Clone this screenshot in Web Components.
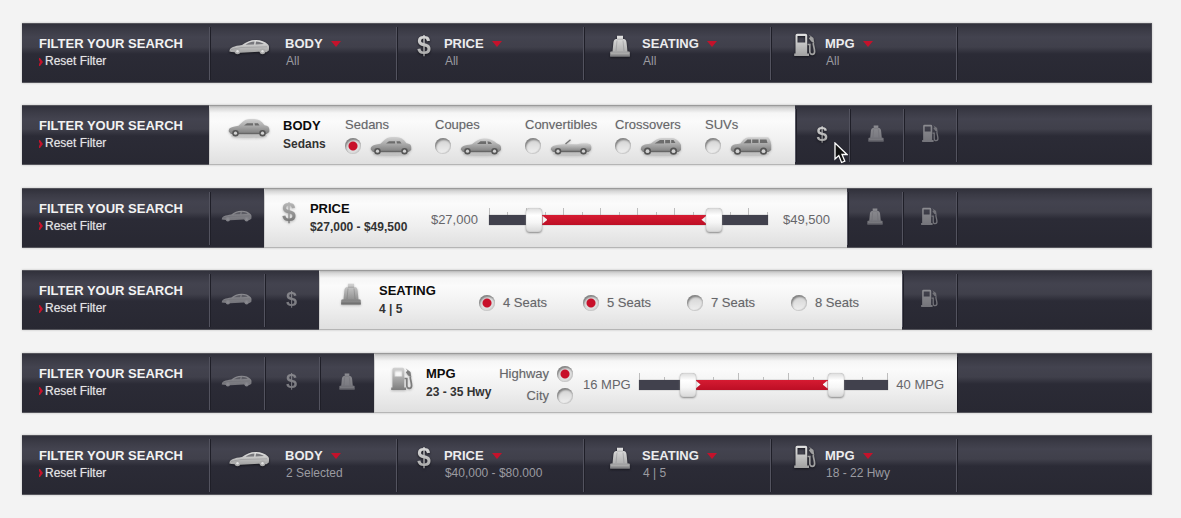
<!DOCTYPE html>
<html lang="en">
<head>
<meta charset="utf-8">
<title>Vehicle search filters</title>
<style>
  body { margin: 0; background: #f3f3f3; font-family: "Liberation Sans", Arial, sans-serif; }
</style>
</head>
<body>
<filter-page>
  <filter-bar>
    <filter-item icon="car" label="BODY" value="All"></filter-item>
    <filter-item icon="dollar" label="PRICE" value="All"></filter-item>
    <filter-item icon="seat" label="SEATING" value="All"></filter-item>
    <filter-item icon="pump" label="MPG" value="All"></filter-item>
  </filter-bar>

  <filter-bar class="narrow">
    <filter-panel icon="sedan" label="BODY" value="Sedans">
      <body-options></body-options>
    </filter-panel>
    <filter-tab icon="dollar" label="Price" active><mouse-pointer></mouse-pointer></filter-tab>
    <filter-tab icon="seat" label="Seating"></filter-tab>
    <filter-tab icon="pump" label="MPG"></filter-tab>
  </filter-bar>

  <filter-bar>
    <filter-tab icon="car" label="Body"></filter-tab>
    <filter-panel icon="dollar" label="PRICE" value="$27,000 - $49,500">
      <range-slider class="price" name="Price" low-label="$27,000" high-label="$49,500" min="22300" max="55200" low="27000" high="49500" ticks="15"></range-slider>
    </filter-panel>
    <filter-tab icon="seat" label="Seating"></filter-tab>
    <filter-tab icon="pump" label="MPG"></filter-tab>
  </filter-bar>

  <filter-bar>
    <filter-tab icon="car" label="Body"></filter-tab>
    <filter-tab icon="dollar" label="Price"></filter-tab>
    <filter-panel icon="seat" label="SEATING" value="4 | 5">
      <seat-options></seat-options>
    </filter-panel>
    <filter-tab icon="pump" label="MPG"></filter-tab>
  </filter-bar>

  <filter-bar>
    <filter-tab icon="car" label="Body"></filter-tab>
    <filter-tab icon="dollar" label="Price"></filter-tab>
    <filter-tab icon="seat" label="Seating"></filter-tab>
    <filter-panel icon="pump" label="MPG" value="23 - 35 Hwy">
      <road-options></road-options>
      <range-slider class="mpg" name="MPG" low-label="16 MPG" high-label="40 MPG" min="160" max="400" low="202" high="354" ticks="10"></range-slider>
    </filter-panel>
  </filter-bar>

  <filter-bar>
    <filter-item icon="car" label="BODY" value="2 Selected"></filter-item>
    <filter-item icon="dollar" label="PRICE" value="$40,000 - $80.000"></filter-item>
    <filter-item icon="seat" label="SEATING" value="4 | 5"></filter-item>
    <filter-item icon="pump" label="MPG" value="18 - 22 Hwy"></filter-item>
  </filter-bar>
</filter-page>

<script>
const define = (name, render) => customElements.define(name, class extends HTMLElement {
  connectedCallback() {
    if (this.shadowRoot) return;
    const t = document.createElement('template');
    t.innerHTML = render(this);
    this.attachShadow({ mode: 'open' }).append(t.content.cloneNode(true));
  }
});
const at = (el, name) => el.getAttribute(name) || '';

/* ---- icons ---- */
const grad = `<defs><linearGradient id="g" x1="0" y1="0" x2="0" y2="1"><stop offset="0" class="s1"/><stop offset="1" class="s2"/></linearGradient></defs>`;
const wheels = (a, b, y, r = 3.3) => [a, b].map(x =>
  `<circle cx="${x}" cy="${y}" r="${r}" class="tire"/><circle cx="${x}" cy="${y}" r="${r - 1.7}" class="hub"/>`).join('');
const shadow = `<ellipse cx="21" cy="18" rx="18" ry="2" class="floor"/>`;
const sill = `<path d="M10 15.5H31" class="sill"/>`;
const icons = {
  car: [40, 16, `<path fill="url(#g)" d="M.5 11.5C1 8.500 5 7 13 6C17 3 21 1 27 1C32 1 36 2.500 39 5.500C40.500 7 40 9 39.800 11.500L37.500 13.200L30 12.800L12 13.800L2.500 13L.3 12.500Z"/>
    <path class="glass" d="M16.500 5.800C19 3.900 22 2.700 25.500 2.500L25 5.600ZM27 2.400C30 2.500 32.500 3.300 35 4.900L26.600 5.500Z"/><path class="line" d="M2 10.500L12 8.500L38 7.800"/>${wheels(8.500, 33.500, 12.300, 2.900)}`],
  sedan: [42, 20, `${shadow}<path fill="url(#g)" d="M.8 13.500C.5 10.500 2 9 10.500 7.800C14 4.500 16 2 20 1.300C26 .5 32 1 35 5.500L36.500 7.300C40.500 8 41.800 9 41.200 14L38.500 16H3Z"/>
    <path class="glass" d="M16 7.500L19 5.200H25V7.500ZM26.500 5.200L30 5.300L31.500 7.500H27Z"/>${sill}${wheels(7.500, 34.500, 15.200)}`],
  coupe: [42, 20, `${shadow}<path fill="url(#g)" d="M.8 13.500C1 10.500 4 9.300 12 8.300C16 5 19 2.800 24 2.600C29 2.500 33 4 37 7.500C40.500 8.500 41.500 10 41 14L38.500 16H3Z"/>
    <path class="glass" d="M17 8L20.500 5.300H26V8ZM27.500 5.300L30.500 5.900L32 8H28Z"/>${sill}${wheels(7.500, 34.500, 15.200)}`],
  convertible: [42, 20, `${shadow}<path fill="url(#g)" d="M.8 13.500C1 10 4 9 15 8L27 8.300C33 6.800 38 7.200 40.500 8.500C41.500 10 41.500 12 41 14L38.500 16H3Z"/>
    <path d="M15.500 8L20.500 3.800" class="post"/>${sill}${wheels(8, 33.500, 15.200)}`],
  crossover: [42, 20, `${shadow}<path fill="url(#g)" d="M.8 13.500C1 9.500 3 8.500 11 7.500C15 4 18 2.200 22 2H33C37 3 40 6.500 41 9V14L38.500 16H3Z"/>
    <path class="glass" d="M14.500 7.500L20 4H24V7.500ZM25.200 4H30V7.300H25.200ZM31.200 4H33.500L35.500 7H31.200Z"/>${sill}${wheels(7.500, 33.500, 15.200, 3.600)}`],
  suv: [42, 20, `${shadow}<path fill="url(#g)" d="M.8 14C.8 9.500 2 8.500 10.500 7.500C13 4 15 1.500 19 1.200H38C40 3 41 6 41.200 9V14L38.500 16H3Z"/>
    <path class="glass" d="M13.500 7.300L17.500 3.400H21V7.300ZM22.200 3.400H28.500V7H22.200ZM30 3.400H36.500L37.500 7H30Z"/>${sill}${wheels(7.500, 33.500, 15.200, 3.600)}`],
  seat: [20, 22, `<path fill="url(#g)" d="M7 .8H13V4H14C16 4.500 16.500 6 16.700 8.500L17.500 16.500H19Q19.800 16.500 19.800 17.500V21.500H.2V17.500Q.2 16.500 1 16.500H2.500L3.300 8.500C3.500 6 4 4.500 6 4H7Z"/>
    <path class="line" d="M7 5.500L6 16M13 5.500L14 16M1 17H19M7 4.200H13"/><path class="base" d="M.2 19.500H19.800V21.500H.2Z"/>`],
  pump: [22, 24, `<path fill="url(#g)" fill-rule="evenodd" d="M1.500 2.500Q1.500 .8 3.200 .8H11.500Q13.200 .8 13.200 2.500V20.500H15V23H.2V20.500H1.500ZM3.500 3V9.500H11.200V3Z"/>
    <path class="hose" d="M13.500 11.500H15.800V18.500C15.800 22.500 20.700 22 20.600 18.500C20.500 14.500 19 12.500 19.300 9.500"/><path class="nozzle" d="M14.500 1.300L19.500 5L20.300 10L17.200 8.500L14.800 5.300L16.500 3.800Z"/>`],
};
define('filter-icon', el => {
  const name = at(el, 'name');
  const css = `<style>
    :host { display: block; --s1: #e2e2e2; --s2: #a0a0a0; --ink: #77777c; --tire: #aaa; filter: drop-shadow(0 1px 1px #15151c); }
    :host([tone="dim"]) { --s1: #8c8c91; --s2: #74747a; --ink: #5c5c64; --tire: #828288; filter: none; }
    :host([tone="mid"]) { --s1: #dedede; --s2: #9a9a9a; }
    :host([tone="light"]) { --s1: #d2d2d2; --s2: #7c7c7c; --ink: #6c6c6c; --tire: #555; filter: drop-shadow(0 1px 1px #bbb); }
    svg { display: block; overflow: visible; }
    .s1 { stop-color: var(--s1); } .s2 { stop-color: var(--s2); }
    .tire { fill: var(--tire); } .hub { fill: var(--s1); }
    .glass { fill: var(--ink); }
    .line { fill: none; stroke: var(--ink); stroke-width: .6; opacity: .6; }
    .base { fill: var(--ink); opacity: .7; }
    .sill { stroke: #666; stroke-width: 1.4; }
    .post { stroke: #777; stroke-width: 1.4; }
    .floor { fill: #bbb; opacity: .6; }
    .hose { fill: none; stroke: var(--s2); stroke-width: 1.700; }
    .nozzle { fill: var(--s2); }
    b { display: block; font-size: 25px; line-height: 26px; text-align: center;
        background: linear-gradient(var(--s1), var(--s2)); -webkit-background-clip: text; background-clip: text; color: transparent; }
    :host([tone="light"]) b { background-image: linear-gradient(#c4c4c4, #6c6c6c); }
    :host([tone="dim"]) b, :host([tone="mid"]) b { font-size: 20px; }
  </style>`;
  if (name === 'dollar') return css + '<b aria-hidden="true">$</b>';
  const [w, h, art] = icons[name];
  const small = /dim|mid/.test(at(el, 'tone'));
  const k = small ? .78 : 1;
  return css + `<svg aria-hidden="true" width="${Math.round(w * k)}" height="${Math.round(h * k)}" viewBox="0 0 ${w} ${h}">${grad}${art}</svg>`;
});

/* ---- page and bars ---- */
define('filter-page', () => `<style>
  :host { display: flex; flex-direction: column; justify-content: space-between; gap: 22px;
          box-sizing: border-box; min-height: 100vh; padding: 23px 29px 23px 22px; }
</style><slot></slot>`);

define('filter-bar', () => `<style>
  :host { --tab: 55px; display: flex; min-height: 60px; box-sizing: border-box;
    background: linear-gradient(#2f2f39, #3b3b46 7px, #43434f 14px, #40404b 24px, #2b2b36 31px, #282832);
    box-shadow: inset 0 1px #55555c, inset 0 -1px #55555c, inset -1px 0 #4a4a53, 0 0 2px #bbb; }
  :host(.narrow) { --tab: 54px; }
  header { flex: 0 0 170px; padding: 12px 0 0 17px; }
  h2 { margin: 0; font-size: 13px; line-height: 18px; color: #f2f2f2; white-space: nowrap; }
  a { display: flex; align-items: center; gap: 2px; font-size: 12px; line-height: 17px; color: #e4e4e6; text-decoration: none; text-shadow: 0 0 1px #88888c; }
  a svg { flex: none; }
  .group { flex: 0 0 748px; display: flex; }
  .rest { flex: 1; margin-left: -1px;
    background: linear-gradient(90deg, #53535f 1px, #1f1f28 1px, #1f1f28 2px, transparent 2px) 0 4px / 100% 53px no-repeat; }
</style>
<header><h2>FILTER YOUR SEARCH</h2>
<a href="#"><svg width="4" height="8" viewBox="0 0 4 8"><path d="M0 0H1L4 4L1 8H0V6L1 4L0 2Z" fill="#c4122b"/></svg>Reset Filter</a></header>
<div class="group"><slot></slot></div><div class="rest"></div>`);

const divider = `background: linear-gradient(90deg, #53535f 1px, #1f1f28 1px, #1f1f28 2px, transparent 2px) 0 4px / 100% 53px no-repeat;`;

define('filter-item', el => `<style>
  :host { flex: 1; min-width: 0; display: block; ${divider} }
  button { all: unset; display: flex; align-items: flex-start; box-sizing: border-box; width: 100%; height: 100%; cursor: pointer; }
  .car { padding: 16px 16px 0 20px; } .dollar { padding: 9px 13px 0 21px; }
  .seat { padding: 12px 12px 0 27px; } .pump { padding: 10px 9px 0 24px; }
  .text { padding-top: 12px; white-space: nowrap; }
  .name { display: flex; align-items: center; gap: 8px; font-size: 13px; line-height: 18px; font-weight: 700; color: #ececee; }
  .value { display: block; padding-left: 1px; font-size: 12px; line-height: 16px; color: #9b9ba1; }
</style>
<button type="button"><filter-icon class="${at(el, 'icon')}" name="${at(el, 'icon')}"></filter-icon>
<span class="text"><span class="name">${at(el, 'label')}<svg width="10" height="6" viewBox="0 0 10 6"><path d="M0 0H10L5 6Z" fill="#c4122b"/></svg></span>
<span class="value">${at(el, 'value')}</span></span></button>`);

define('filter-tab', el => `<style>
  :host { flex: 0 0 var(--tab); position: relative; display: block; ${divider} }
  button { all: unset; display: flex; align-items: center; justify-content: center; width: 100%; height: 57px; cursor: pointer; }
</style>
<button type="button" aria-label="${at(el, 'label')}"><filter-icon name="${at(el, 'icon')}" tone="${el.hasAttribute('active') ? 'mid' : 'dim'}"></filter-icon></button><slot></slot>`);

define('mouse-pointer', () => `<style>
  :host { position: absolute; left: 39px; top: 37px; pointer-events: none; } svg { display: block; }
</style><svg width="14" height="22" viewBox="0 0 14 22"><path d="M1 1V17L4.800 13.500L7.600 20.500L10.800 19.200L8 12.500H13Z" fill="#111" stroke="#fff" stroke-width="1.300"/></svg>`);

define('filter-panel', el => `<style>
  :host { flex: 1; min-width: 0; position: relative; display: flex; align-items: stretch;
    background: linear-gradient(#a9a9a9, #d6d6d6 3px, #f6f6f6 8px, #fbfbfb 16px, #f0f0f0 36px, #dfdfdf);
    box-shadow: inset 0 -1px #b5b5b5, inset 0 1px #9a9a9a, inset 1px 0 #cfcfcf; }
  .sedan { padding: 13px 13px 0 19px; } .dollar { padding: 11px 14px 0 18px; }
  .seat { padding: 13px 18px 0 22px; } .pump { padding: 14px 13px 0 17px; }
  .text { flex: none; padding-top: 12px; white-space: nowrap; color: #151515; }
  h3 { margin: 0; font-size: 13px; line-height: 18px; color: #0c0c0c; }
  p { margin: 0; font-size: 12px; line-height: 18px; font-weight: 700; color: #333; }
  .wsedan { width: 62px; } .wdollar { width: 121px; } .wseat { width: 100px; } .wpump { width: 74px; }
</style>
<filter-icon class="${at(el, 'icon')}" name="${at(el, 'icon')}" tone="light"></filter-icon>
<div class="text w${at(el, 'icon')}"><h3>${at(el, 'label')}</h3><p>${at(el, 'value')}</p></div><slot></slot>`);

/* ---- controls ---- */
const controlCss = `
  label { color: #66666a; font-size: 13px; line-height: 16px; white-space: nowrap; text-shadow: 0 0 1px #c4c4c4; }
  input { appearance: none; flex: none; width: 16px; height: 16px; margin: 0; border-radius: 50%;
    background: linear-gradient(#d2d2d2, #f0f0f0); box-shadow: inset 1px 2px 2px #808080, inset -1px -1px 1px #c8c8c8; }
  input:checked { background: radial-gradient(circle, #c8102a 4px, #dedede 5px); }
`;
define('body-options', () => `<style>
  :host { display: grid; grid-template-columns: repeat(5, 90px); align-content: start; padding-top: 12px; }
  ${controlCss}
  .top { display: block; }
  .row { display: flex; align-items: center; gap: 9px; height: 26px; }
</style>` + [['Sedans', 'sedan'], ['Coupes', 'coupe'], ['Convertibles', 'convertible'], ['Crossovers', 'crossover'], ['SUVs', 'suv']]
  .map(([t, i], n) => `<label><span class="top">${t}</span><span class="row"><input type="checkbox" name="body"${n ? '' : ' checked'}><filter-icon name="${i}" tone="light"></filter-icon></span></label>`).join(''));

define('seat-options', () => `<style>
  :host { display: grid; grid-template-columns: repeat(4, 104px); align-items: center; padding-top: 5px; }
  ${controlCss}
  label { display: flex; align-items: center; gap: 8px; }
</style>` + [4, 5, 7, 8].map(n => `<label><input type="checkbox" name="seats"${n < 6 ? ' checked' : ''}>${n} Seats</label>`).join(''));

define('road-options', () => `<style>
  :host { flex: none; width: 73px; display: flex; flex-direction: column; gap: 6px; padding-top: 13px; }
  ${controlCss}
  label { display: flex; justify-content: flex-end; align-items: center; gap: 8px; }
</style>
<label>Highway<input type="radio" name="road" checked></label>
<label>City<input type="radio" name="road"></label>`);

define('range-slider', el => {
  const n = k => Number(at(el, k));
  const pos = v => (v - n('min')) / (n('max') - n('min'));
  const marks = '<i></i>'.repeat(n('ticks') + 1);
  const input = (k, text) => `<input type="range" aria-label="${text} ${at(el, 'name')}" min="${n('min')}" max="${n('max')}" value="${n(k)}">`;
  return `<style>
  :host { flex: 1; display: flex; align-items: center; box-sizing: border-box; padding-top: 4px; font-size: 13px; color: #66666a; white-space: nowrap; }
  :host(.price) { gap: 11px; padding-right: 17px; }
  :host(.price) .high { padding-left: 4px; }
  :host(.mpg) { gap: 8px; padding-right: 13px; padding-left: 10px; }
  .track { flex: 1; display: grid; align-items: center; height: 24px; --a: ${pos(n('low'))}; --b: ${pos(n('high'))}; }
  .track > * { grid-area: 1 / 1; }
  .ticks { display: flex; justify-content: space-between; align-self: start; align-items: flex-end; height: 8px; }
  .ticks i { width: 1px; height: 4px; background: #bdbdbd; }
  .ticks i:nth-child(odd) { height: 8px; }
  .rail { height: 10px; background: #41414d; box-shadow: 0 0 1px #888; }
  .fill { position: relative; height: 10px; background: linear-gradient(#d61b32, #bd0e25);
    margin-left: calc(16px + (100% - 16px) * var(--a)); margin-right: calc(100% - (100% - 16px) * var(--b)); }
  .fill::before, .fill::after { content: ""; position: absolute; top: 1px; width: 5px; height: 8px; background: #f4f4f4; }
  .fill::before { left: 0; clip-path: polygon(0 0, 100% 50%, 0 100%); }
  .fill::after { right: 0; clip-path: polygon(100% 0, 0 50%, 100% 100%); }
  input { appearance: none; position: relative; width: 100%; height: 24px; margin: 0; background: none; pointer-events: none; }
  input::-webkit-slider-thumb { appearance: none; pointer-events: auto; width: 16px; height: 24px; border-radius: 4px;
    background: linear-gradient(#dcdcdc, #fff 30%, #f6f6f6 60%, #d8d8d8); box-shadow: inset 0 0 1px #888, 0 1px 2px #888; }
  </style>
  <span>${at(el, 'low-label')}</span>
  <div class="track"><div class="ticks">${marks}</div><div class="rail"></div><div class="fill"></div>${input('low', 'Minimum')}${input('high', 'Maximum')}</div>
  <span class="high">${at(el, 'high-label')}</span>`;
});
</script>
</body>
</html>
